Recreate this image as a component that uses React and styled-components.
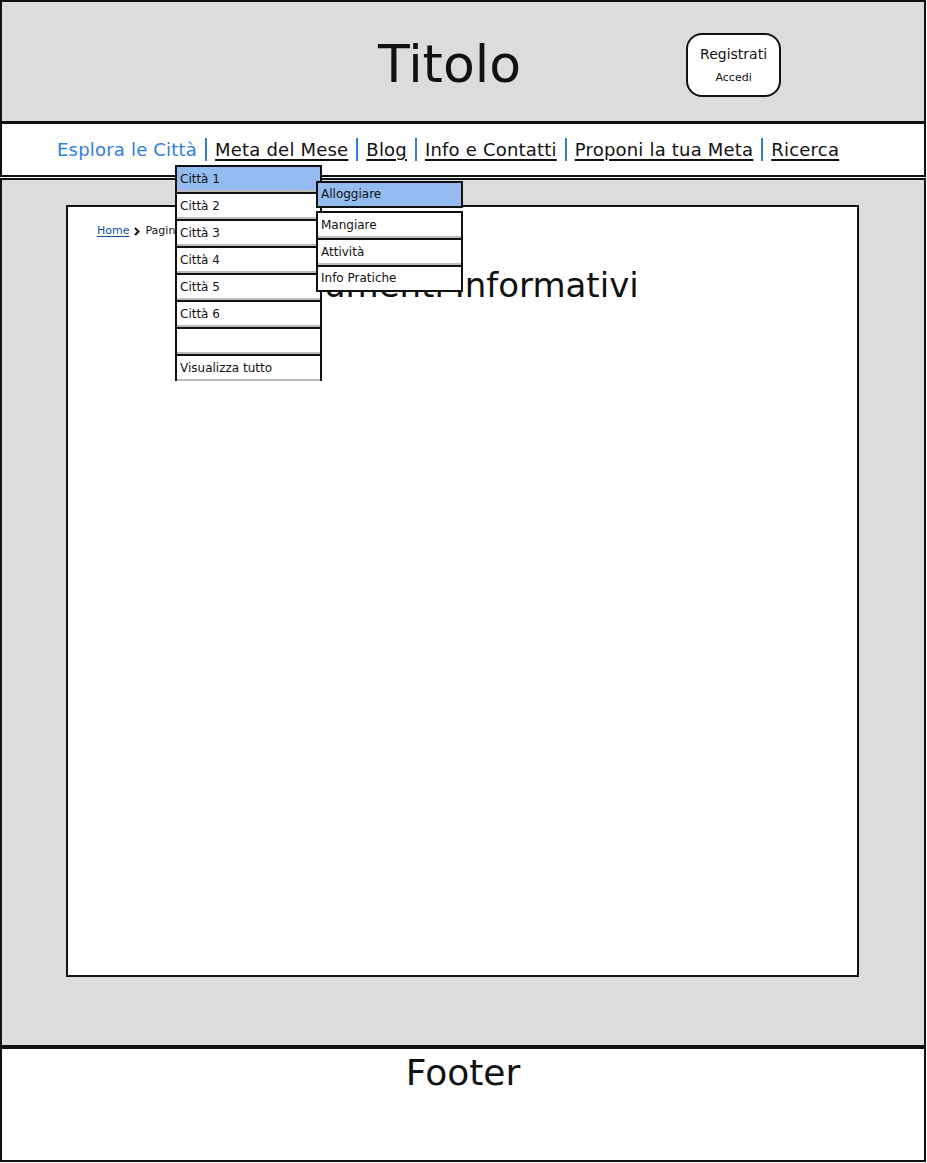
import React from "react";
import styled, { createGlobalStyle } from "styled-components";

const GlobalStyle = createGlobalStyle`
  html, body { margin: 0; padding: 0; background: #ffffff; }
  body { font-family: "DejaVu Sans", "Liberation Sans", sans-serif; color: #111; }
  * { box-sizing: border-box; }
`;

const Page = styled.div`
  position: relative;
  width: 926px;
  min-height: 1163px;
`;

const Header = styled.header`
  height: 123px;
  background: #dcdcdc;
  border: 2px solid #111;
  display: flex;
  align-items: flex-start;
  padding: 31px 0 0 376px;
  gap: 165px;
`;

const Title = styled.h1`
  margin: 5px 0 0;
  font-size: 52px;
  line-height: 1;
  font-weight: normal;
  color: #111;
`;

const AuthButton = styled.div`
  width: 95px;
  height: 64px;
  background: #fff;
  border: 2px solid #111;
  border-radius: 16px;
  display: flex;
  flex-direction: column;
  align-items: center;
  justify-content: center;
  gap: 8px;
`;

const AuthText = styled.span`
  font-size: ${(p) => p.$size}px;
  line-height: 1.2;
  color: #111;
`;

const Nav = styled.nav`
  height: 54px;
  background: #fff;
  border: 2px solid #111;
  border-top-width: 1px;
  display: flex;
  align-items: center;
  padding-left: 47px;
`;

const NavLink = styled.a`
  font-size: 18px;
  letter-spacing: 0.2px;
  margin: 0 8px;
  color: ${(p) => (p.$current ? "#2f7de3" : "#111")};
  text-decoration: ${(p) => (p.$current ? "none" : "underline")};
  text-underline-offset: 3px;
  text-decoration-thickness: 1.5px;
  white-space: nowrap;
  cursor: pointer;
`;

const Separator = styled.span`
  width: 2px;
  height: 23px;
  background: #2f7de3;
  display: block;
`;

const Content = styled.main`
  margin-top: 1px;
  background: #dcdcdc;
  border: 2px solid #111;
  padding: 25px 65px 68px 64px;
`;

const Panel = styled.section`
  height: 772px;
  background: #fff;
  border: 2px solid #111;
  padding: 17px 0 0 29px;
`;

const Breadcrumb = styled.div`
  display: flex;
  align-items: center;
  gap: 5px;
  font-size: 11px;
  line-height: 14px;
  height: 14px;
`;

const CrumbLink = styled.a`
  color: #0b4ea8;
  text-decoration: underline;
  text-underline-offset: 2px;
`;

const CrumbText = styled.span`
  color: #111;
`;

const Heading = styled.h2`
  margin: 30px 0 0 -29px;
  padding-right: 28px;
  text-align: center;
  font-size: 34px;
  line-height: 1;
  font-weight: normal;
  color: #111;
`;

const Footer = styled.footer`
  height: 115px;
  background: #fff;
  border: 2px solid #111;
  text-align: center;
  padding-top: 6px;
`;

const FooterTitle = styled.div`
  font-size: 36px;
  line-height: 1;
  color: #111;
`;

const Dropdown = styled.ul`
  position: absolute;
  left: 175px;
  top: 165px;
  width: 147px;
  margin: 0;
  padding: 0;
  list-style: none;
  z-index: 10;
`;

const SubMenu = styled.ul`
  position: absolute;
  left: 141px;
  top: 16px;
  width: 147px;
  margin: 0;
  padding: 0;
  list-style: none;
  z-index: 11;
`;

const MenuItem = styled.li`
  height: 27px;
  border: 2px solid #111;
  border-bottom-width: 0;
  box-shadow: inset 0 -2px 0 #bdbdbd;
  background: ${(p) => (p.$active ? "#95bcf0" : "#fff")};
  font-size: 12px;
  color: #111;
  display: flex;
  align-items: center;
  padding: 0 0 1px 3px;
  white-space: nowrap;
  &:last-child {
    border-bottom-width: 2px;
    box-shadow: none;
  }
`;

const SubHead = styled(MenuItem)`
  border-bottom-width: 2px;
  box-shadow: none;
  margin-bottom: 3px;
`;

const Chevron = () => (
  <svg width="6" height="9" viewBox="0 0 6 9" aria-hidden="true">
    <path d="M1 1 L4.5 4.5 L1 8" fill="none" stroke="#111" strokeWidth="2" />
  </svg>
);

const navItems = [
  "Meta del Mese",
  "Blog",
  "Info e Contatti",
  "Proponi la tua Meta",
  "Ricerca",
];

const cities = ["Città 1", "Città 2", "Città 3", "Città 4", "Città 5", "Città 6", "", "Visualizza tutto"];
const subItems = ["Mangiare", "Attività", "Info Pratiche"];

export default function App() {
  return (
    <>
      <GlobalStyle />
      <Page>
        <Header>
          <Title>Titolo</Title>
          <AuthButton>
            <AuthText $size={14}>Registrati</AuthText>
            <AuthText $size={11}>Accedi</AuthText>
          </AuthButton>
        </Header>
        <Nav>
          <NavLink $current>Esplora le Città</NavLink>
          {navItems.map((item) => (
            <React.Fragment key={item}>
              <Separator />
              <NavLink>{item}</NavLink>
            </React.Fragment>
          ))}
        </Nav>
        <Content>
          <Panel>
            <Breadcrumb>
              <CrumbLink>Home</CrumbLink>
              <Chevron />
              <CrumbText>Pagina</CrumbText>
            </Breadcrumb>
            <Heading>Documenti Informativi</Heading>
          </Panel>
        </Content>
        <Footer>
          <FooterTitle>Footer</FooterTitle>
        </Footer>
        <Dropdown>
          {cities.map((c, i) => (
            <MenuItem key={i} $active={i === 0}>
              {c || "\u00a0"}
            </MenuItem>
          ))}
          <SubMenu>
            <SubHead $active>Alloggiare</SubHead>
            {subItems.map((s) => (
              <MenuItem key={s}>{s}</MenuItem>
            ))}
          </SubMenu>
        </Dropdown>
      </Page>
    </>
  );
}
